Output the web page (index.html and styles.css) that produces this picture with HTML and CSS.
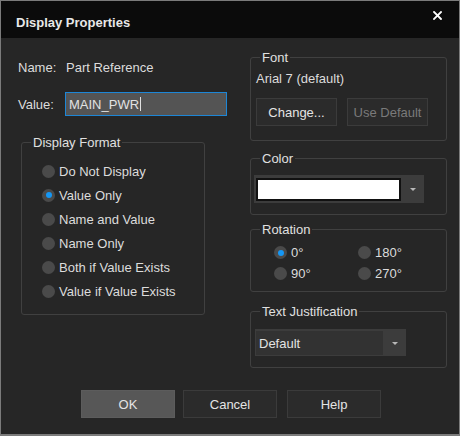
FILE: index.html
```html
<!DOCTYPE html>
<html>
<head>
<meta charset="utf-8">
<title>Display Properties</title>
<link rel="stylesheet" href="styles.css">
</head>
<body>
<div class="dialog">
  <div class="titlebar">
    <span class="title">Display Properties</span>
    <svg class="close" width="9" height="9" viewBox="0 0 9 9"><path d="M1 1 L8 8 M8 1 L1 8" stroke="#ffffff" stroke-width="1.8" stroke-linecap="square"/></svg>
  </div>
  <div class="content">
    <div class="left">
      <div class="row name-row"><span class="label name-label">Name:</span><span>Part Reference</span></div>
      <div class="row value-row"><span class="label value-label">Value:</span><div class="input">MAIN_PWR<span class="caret"></span></div></div>
      <fieldset class="group format">
        <legend>Display Format</legend>
        <div class="radio-list">
          <div class="radio-item"><span class="radio"></span>Do Not Display</div>
          <div class="radio-item"><span class="radio checked"></span>Value Only</div>
          <div class="radio-item"><span class="radio"></span>Name and Value</div>
          <div class="radio-item"><span class="radio"></span>Name Only</div>
          <div class="radio-item"><span class="radio"></span>Both if Value Exists</div>
          <div class="radio-item"><span class="radio"></span>Value if Value Exists</div>
        </div>
      </fieldset>
    </div>
    <div class="right">
      <fieldset class="group font-group">
        <legend>Font</legend>
        <div class="font-name">Arial 7 (default)</div>
        <div class="font-buttons">
          <div class="btn">Change...</div>
          <div class="btn disabled">Use Default</div>
        </div>
      </fieldset>
      <fieldset class="group color-group">
        <legend>Color</legend>
        <div class="color-combo">
          <div class="swatch"></div>
          <div class="combo-arrow"><span class="tri"></span></div>
        </div>
      </fieldset>
      <fieldset class="group rotation-group">
        <legend>Rotation</legend>
        <div class="rotation-grid">
          <div class="radio-item small"><span class="radio checked"></span>0°</div>
          <div class="radio-item small"><span class="radio"></span>180°</div>
          <div class="radio-item small"><span class="radio"></span>90°</div>
          <div class="radio-item small"><span class="radio"></span>270°</div>
        </div>
      </fieldset>
      <fieldset class="group just-group">
        <legend>Text Justification</legend>
        <div class="select">
          <div class="select-value">Default</div>
          <div class="combo-arrow"><span class="tri"></span></div>
        </div>
      </fieldset>
    </div>
  </div>
  <div class="footer">
    <div class="btn dlg-btn primary">OK</div>
    <div class="btn dlg-btn">Cancel</div>
    <div class="btn dlg-btn help">Help</div>
  </div>
</div>
</body>
</html>
```

FILE: styles.css
```css
html, body {
  margin: 0;
  padding: 0;
  background: #262626;
}
body {
  font-family: "Liberation Sans", Arial, sans-serif;
  font-size: 13px;
  color: #dcdcdc;
}
.dialog {
  width: 460px;
  height: 436px;
  box-sizing: border-box;
  border: 1px solid #7b7b7b;
  border-bottom-width: 2px;
  background: #262626;
  display: flex;
  flex-direction: column;
}
.titlebar {
  height: 37px;
  flex: none;
  background: #0b0b0b;
  display: flex;
  justify-content: space-between;
  align-items: flex-start;
  padding: 0 17px 0 15px;
}
.title {
  font-weight: bold;
  font-size: 13px;
  line-height: 16px;
  color: #e8e8e8;
  margin-top: 14px;
}
.close {
  margin-top: 10px;
  display: block;
}
.content {
  display: grid;
  grid-template-columns: 232px 197px;
  align-items: start;
  padding: 12px 0 0 17px;
}
.row {
  display: flex;
  align-items: center;
  height: 24px;
  line-height: 15px;
}
.name-row { margin-top: 5px; }
.value-row { margin-top: 13px; }
.name-label { width: 48px; }
.value-label { width: 47px; }
.input {
  width: 162px;
  height: 24px;
  box-sizing: border-box;
  border: 1px solid #1d86d6;
  background: #545454;
  color: #e2e2e2;
  padding-left: 3px;
  display: flex;
  align-items: center;
}
.caret {
  display: inline-block;
  width: 1px;
  height: 14px;
  background: #e0e0e0;
  margin-left: 1px;
}
.group {
  margin: 0;
  border: 1px solid #404040;
  border-radius: 3px;
  padding: 0 5px;
  min-width: 0;
}
.group legend {
  padding: 0 2px;
  margin-left: 4px;
  line-height: 15px;
  color: #e0e0e0;
}
.format {
  margin-top: 19px;
  margin-left: 3px;
  width: 184px;
  box-sizing: border-box;
  padding-top: 9px;
  padding-bottom: 11px;
}
.radio-item {
  display: flex;
  align-items: center;
  height: 24px;
  padding-left: 15px;
  white-space: nowrap;
}
.radio {
  width: 13px;
  height: 13px;
  border-radius: 50%;
  background: #4a4a4a;
  margin-right: 4px;
  flex: none;
  display: flex;
  align-items: center;
  justify-content: center;
}
.radio.checked::after {
  content: "";
  width: 6px;
  height: 6px;
  border-radius: 50%;
  background: #1597f5;
}
.right {
  display: flex;
  flex-direction: column;
}
.right .group {
  width: 197px;
  box-sizing: border-box;
}
.font-group {
  padding-top: 6px;
  padding-bottom: 14px;
}
.font-name {
  line-height: 15px;
}
.font-buttons {
  display: flex;
  gap: 10px;
  margin-top: 12px;
}
.btn {
  box-sizing: border-box;
  height: 28px;
  border: 1px solid #3b3b3b;
  background: #2b2b2b;
  color: #e4e4e4;
  display: flex;
  align-items: center;
  justify-content: center;
  width: 81px;
}
.btn.disabled {
  color: #7a7a7a;
}
.color-group {
  margin-top: 10px;
  padding-top: 9px;
  padding-bottom: 11px;
}
.color-combo {
  display: flex;
  width: 170px;
  height: 28px;
  margin-left: -2px;
  background: #3c3c3c;
  box-sizing: border-box;
  padding: 3px 0 2px 2px;
}
.swatch {
  width: 145px;
  height: 23px;
  box-sizing: border-box;
  background: #ffffff;
  border: 2px solid #111111;
}
.combo-arrow {
  flex: 1;
  display: flex;
  align-items: center;
  justify-content: center;
}
.tri {
  width: 0;
  height: 0;
  border-left: 3px solid transparent;
  border-right: 3px solid transparent;
  border-top: 3px solid #b8b8b8;
}
.rotation-group {
  margin-top: 7px;
  padding-top: 5px;
  padding-bottom: 7px;
}
.rotation-grid {
  display: grid;
  grid-template-columns: 84px 1fr;
  padding-left: 18px;
}
.radio-item.small {
  height: 21px;
  padding-left: 0;
}
.just-group {
  margin-top: 12px;
  padding-top: 10px;
  padding-bottom: 11px;
}
.select {
  display: flex;
  width: 151px;
  height: 27px;
  margin-left: -1px;
  box-sizing: border-box;
  background: #3c3c3c;
  padding: 2px 0 1px 1px;
}
.select-value {
  width: 127px;
  background: #323232;
  display: flex;
  align-items: center;
  padding-left: 3px;
  box-sizing: border-box;
  color: #e2e2e2;
}
.footer {
  display: flex;
  gap: 8px;
  margin-top: 22px;
  padding-left: 80px;
}
.dlg-btn {
  width: 94px;
}
.dlg-btn.primary {
  background: #575757;
  border-color: #5c5c5c;
}
.dlg-btn.help {
  margin-left: 2px;
}
```
